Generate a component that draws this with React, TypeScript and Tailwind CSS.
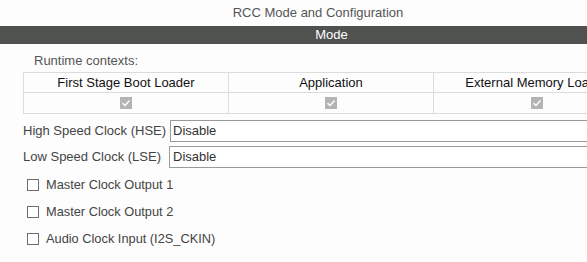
import React from 'react';

const font = { fontFamily: '"Liberation Sans", Arial, sans-serif' };

function CheckedBox() {
  return (
    <svg width="12" height="12" viewBox="0 0 12 12">
      <rect x="0" y="0" width="12" height="12" fill="#b4b4b4" />
      <path d="M2.5 6.2 L5 8.5 L9.5 3.5" stroke="#fff" strokeWidth="1.4" fill="none" />
    </svg>
  );
}

function Option({ label }: { label: string }) {
  return (
    <div className="flex h-[27px] items-center pl-[27px]">
      <span className="h-[12px] w-[12px] border border-[#6e6e6e] bg-white" />
      <span className="ml-[7px] text-[12.8px] text-[#444]">{label}</span>
    </div>
  );
}

export default function App() {
  const contexts = ['First Stage Boot Loader', 'Application', 'External Memory Loader'];

  return (
    <div className="h-[262px] w-[587px] overflow-hidden bg-[#fdfdfd]" style={font}>
      <div className="w-[663px]">
        <div className="flex h-[26px] w-[636px] items-center justify-center text-[13px] text-[#555]">
          RCC Mode and Configuration
        </div>
        <div className="flex h-[18px] items-center justify-center bg-[#505250] text-[13px] text-white">
          Mode
        </div>

        <div className="px-[23px]">
          <div className="flex h-[28px] items-end pb-[2px] pl-[11px] text-[13px] text-[#555]">
            Runtime contexts:
          </div>
          <div className="grid grid-cols-3 border border-[#dcdcdc]">
            {contexts.map((c, i) => (
              <div
                key={c}
                className={`flex h-[20px] items-center justify-center border-b border-[#dcdcdc] text-[13px] text-[#111] ${
                  i < 2 ? 'border-r' : ''
                }`}
              >
                {c}
              </div>
            ))}
            {contexts.map((c, i) => (
              <div
                key={c + '-chk'}
                className={`flex h-[20px] items-center justify-center border-[#dcdcdc] ${i < 2 ? 'border-r' : ''}`}
              >
                <CheckedBox />
              </div>
            ))}
          </div>

          <div className="mt-[5px] flex h-[23px] items-center">
            <span className="w-[147px] text-[13px] text-[#444]">High Speed Clock (HSE)</span>
            <div className="flex h-[22px] flex-1 items-center border border-[#9a9a9a] bg-white pl-[2px] text-[13px] text-[#333]">
              Disable
            </div>
          </div>
          <div className="mt-[4px] flex h-[22px] items-center">
            <span className="w-[146px] text-[13px] text-[#444]">Low Speed Clock (LSE)</span>
            <div className="flex h-[22px] flex-1 items-center border border-[#9a9a9a] bg-white pl-[3px] text-[13px] text-[#333]">
              Disable
            </div>
          </div>
        </div>

        <div className="mt-[3px]">
          <Option label="Master Clock Output 1" />
          <Option label="Master Clock Output 2" />
          <Option label="Audio Clock Input (I2S_CKIN)" />
        </div>
      </div>
    </div>
  );
}
